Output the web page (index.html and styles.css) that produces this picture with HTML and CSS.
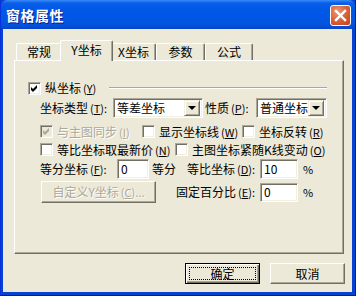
FILE: index.html
```html
<!DOCTYPE html>
<html lang="zh">
<head>
	<meta charset="UTF-8" />
	<title>窗格属性</title>
	<link rel="stylesheet" href="styles.css">
</head>
<body>

<div class="window">

	<!-- 标题栏 -->
	<div class="titlebar">
		<span class="title">窗格属性</span>
		<span class="close">
			<svg width="13" height="13" viewBox="0 0 13 13"><path d="M2 2 L11 11 M11 2 L2 11" stroke="#fff" stroke-width="2.4" stroke-linecap="square"/></svg>
		</span>
	</div>

	<div class="client">

		<div class="tabs">
			<div class="tab t1">常规</div>
			<div class="tab t2 active">Y坐标</div>
			<div class="tab t3">X坐标</div>
			<div class="tab t4">参数</div>
			<div class="tab t5">公式</div>
		</div>

		<div class="panel">

			<div class="row row1">
				<span class="check"><svg width="7" height="7" viewBox="0 0 7 7"><polygon points="0,2 2,4 6,0 6,3 2,7 0,5" fill="#000"/></svg></span>
				<span class="cap">纵坐标<span class="key">(<u>Y</u>)</span></span>
				<span class="sep"></span>
			</div>

			<div class="row row2 indent">
				<span class="lbl w73">坐标类型<span class="key">(<u>T</u>):</span></span>
				<span class="combo c1"><span class="val">等差坐标</span><span class="drop"><i></i></span></span>
				<span class="lbl w51 ml2">性质<span class="key">(<u>P</u>):</span></span>
				<span class="combo c2"><span class="val">普通坐标</span><span class="drop"><i></i></span></span>
			</div>

			<div class="row row3 indent">
				<span class="item w102 disabled">
					<span class="check off"><svg width="7" height="7" viewBox="0 0 7 7"><polygon points="0,2 2,4 6,0 6,3 2,7 0,5" fill="#ACA899"/></svg></span>
					<span class="cap">与主图同步<span class="key">(<u>I</u>)</span></span>
				</span>
				<span class="item w100">
					<span class="check"></span>
					<span class="cap">显示坐标线<span class="key">(<u>W</u>)</span></span>
				</span>
				<span class="item">
					<span class="check"></span>
					<span class="cap">坐标反转<span class="key">(<u>R</u>)</span></span>
				</span>
			</div>

			<div class="row row4 indent">
				<span class="item w135">
					<span class="check"></span>
					<span class="cap">等比坐标取最新价<span class="key">(<u>N</u>)</span></span>
				</span>
				<span class="item">
					<span class="check"></span>
					<span class="cap">主图坐标紧随K线变动<span class="key">(<u>O</u>)</span></span>
				</span>
			</div>

			<div class="row row5 indent">
				<span class="lbl w77">等分坐标<span class="key">(<u>F</u>):</span></span>
				<span class="edit w32">0</span>
				<span class="lbl w35 ml3">等分</span>
				<span class="lbl w73">等比坐标<span class="key">(<u>D</u>):</span></span>
				<span class="edit w38">10</span>
				<span class="pct">%</span>
			</div>

			<div class="row row6 indent">
				<button class="btn custom" type="button" disabled>自定义Y坐标<span class="key">(<u>C</u>)...</span></button>
				<span class="lbl w84 ml20">固定百分比<span class="key">(<u>E</u>):</span></span>
				<span class="edit w38 short">0</span>
				<span class="pct">%</span>
			</div>

		</div>

		<div class="buttons">
			<button class="btn default" type="button"><span class="focus">确定</span></button>
			<button class="btn" type="button">取消</button>
		</div>

	</div>
</div>

</body>
</html>
```

FILE: styles.css
```css
* {
	box-sizing: border-box;
}

body {
	margin: 0;
	font-family: 'Noto Sans CJK SC', 'DejaVu Sans', sans-serif;
	font-size: 12px;
	line-height: 14px;
	color: #000;
	background: #fff;
}

u {
	text-decoration: underline;
	text-underline-offset: 1px;
}

/* 助记符 (X) 用窄一点的字 */
.key {
	font-size: 11px;
	margin-left: 2px;
}

/* 外框 */
.window {
	width: 356px;
	height: 296px;
	background: #0842D0;
	display: flex;
	flex-direction: column;
	border-left: 1px solid #0831D9;
	border-right: 1px solid #001EA0;
	border-bottom: 1px solid #001EA0;
}

.titlebar {
	height: 29px;
	flex-shrink: 0;
	display: flex;
	align-items: center;
	justify-content: space-between;
	padding: 0 4px 0 5px;
	background: linear-gradient(to bottom, #3A8CF8 0%, #0B5FE9 10%, #0058E6 30%, #0256E4 70%, #0450D8 90%, #0645C8 100%);
	border-radius: 6px 6px 0 0;
}

.title {
	color: #fff;
	font-weight: bold;
	font-size: 14px;
	letter-spacing: 0.5px;
	text-shadow: 1px 1px #0A1E88;
	margin-top: 1px;
}

.close {
	width: 21px;
	height: 21px;
	border: 1px solid #fff;
	border-radius: 3px;
	background: radial-gradient(circle at 35% 30%, #E9997A 0%, #D9623A 50%, #C1401A 100%);
	display: flex;
	align-items: center;
	justify-content: center;
	margin-top: 2px;
}

.close svg {
	display: block;
}

.client {
	flex: 1;
	margin: 0 3px 3px 2px;
	background: #ECE9D8;
	padding: 11px 0 0 11px;
}

/* 选项卡 */
.tabs {
	display: flex;
	align-items: flex-end;
	height: 20px;
	padding-left: 2px;
	position: relative;
	z-index: 1;
}

.tab {
	height: 17px;
	padding-top: 1px;
	text-align: center;
	background: #ECE9D8;
	border-top: 1px solid #fff;
	border-left: 1px solid #fff;
	border-right: 1px solid #716F64;
	box-shadow: inset -1px 0 #ACA899;
	border-radius: 2px 2px 0 0;
}

.tab.t1 { width: 46px; }
.tab.t2 { width: 51px; }
.tab.t3 { width: 45px; }
.tab.t4 { width: 49px; }
.tab.t5 { width: 48px; }

.tab.active {
	height: 21px;
	margin: 0 -2px -1px -2px;
	padding-top: 2px;
	position: relative;
	z-index: 2;
}

.tab.t2.active { width: 53px; }

.panel {
	width: 330px;
	height: 194px;
	border-top: 1px solid #fff;
	border-left: 1px solid #fff;
	border-right: 1px solid #716F64;
	border-bottom: 1px solid #716F64;
	box-shadow: inset -1px -1px #ACA899;
	padding: 20px 16px 0 13px;
}

.row {
	display: flex;
	align-items: center;
	white-space: nowrap;
}

.indent {
	margin-left: 12px;
}

.row1 { height: 14px; }
.row2 { height: 20px; margin-top: 3px; }
.row3 { height: 15px; margin-top: 6px; }
.row4 { height: 15px; margin-top: 3px; }
.row5 { height: 20px; margin-top: 2px; }
.row6 { height: 22px; margin-top: 2px; }

.cap {
	margin-left: 4px;
}

.sep {
	flex: 1;
	height: 2px;
	margin-left: 13px;
	border-top: 1px solid #ACA899;
	border-bottom: 1px solid #fff;
}

/* 复选框 */
.check {
	width: 13px;
	height: 13px;
	flex-shrink: 0;
	background: #fff;
	border: 1px solid;
	border-color: #ACA899 #fff #fff #ACA899;
	box-shadow: inset 1px 1px #716F64, inset -1px -1px #F1EFE2;
	display: flex;
	align-items: center;
	justify-content: center;
}

.check svg {
	display: block;
}

.check.off {
	background: #ECE9D8;
}

.item {
	display: flex;
	align-items: center;
}

.disabled .cap {
	color: #ACA899;
	text-shadow: 1px 1px #fff;
}

.w32 { width: 32px; }
.w35 { width: 35px; }
.w38 { width: 38px; }
.w51 { width: 51px; }
.w73 { width: 73px; }
.w77 { width: 77px; }
.w84 { width: 84px; }
.w100 { width: 100px; }
.w102 { width: 102px; }
.w135 { width: 135px; }
.ml2 { margin-left: 2px; }
.ml3 { margin-left: 3px; }
.ml20 { margin-left: 20px; }

.lbl {
	flex-shrink: 0;
}

/* 下拉框 */
.combo {
	height: 20px;
	display: flex;
	align-items: center;
	background: #fff;
	border: 1px solid;
	border-color: #ACA899 #fff #fff #ACA899;
	box-shadow: inset 1px 1px #716F64, inset -1px -1px #F1EFE2;
	padding: 2px;
	flex-shrink: 0;
}

.combo.c1 { width: 90px; }
.combo.c2 { width: 71px; }

.combo .val {
	flex: 1;
	padding-left: 1px;
}

.drop {
	width: 16px;
	height: 16px;
	flex-shrink: 0;
	background: #ECE9D8;
	border: 1px solid;
	border-color: #F1EFE2 #716F64 #716F64 #F1EFE2;
	box-shadow: inset 1px 1px #fff, inset -1px -1px #ACA899;
	display: flex;
	align-items: center;
	justify-content: center;
}

.drop i {
	width: 0;
	height: 0;
	border-left: 4px solid transparent;
	border-right: 4px solid transparent;
	border-top: 4px solid #000;
}

/* 文本框 */
.edit {
	height: 20px;
	background: #fff;
	border: 1px solid;
	border-color: #ACA899 #fff #fff #ACA899;
	box-shadow: inset 1px 1px #716F64, inset -1px -1px #F1EFE2;
	padding: 2px 0 0 3px;
	flex-shrink: 0;
}

.edit.short {
	height: 19px;
	padding-top: 1px;
}

.pct {
	margin-left: 5px;
	font-size: 11px;
}

/* 按钮 */
.btn {
	font-family: inherit;
	font-size: 12px;
	line-height: 14px;
	color: #000;
	background: #ECE9D8;
	border: 1px solid;
	border-color: #fff #716F64 #716F64 #fff;
	box-shadow: inset -1px -1px #ACA899;
	padding: 0;
	width: 75px;
	height: 21px;
	display: flex;
	align-items: center;
	justify-content: center;
}

.btn.custom {
	width: 115px;
	height: 22px;
	margin-left: 1px;
	color: #ACA899;
	text-shadow: 1px 1px #fff;
}

.buttons {
	display: flex;
	justify-content: flex-end;
	gap: 10px;
	margin-top: 9px;
	padding-right: 7px;
}

.btn.default {
	border: 1px solid #000;
	box-shadow: inset 1px 1px #fff, inset -1px -1px #716F64, inset -2px -2px #ACA899;
	padding: 3px;
}

.btn .focus {
	flex: 1;
	align-self: stretch;
	border: 1px dotted #000;
	display: flex;
	align-items: center;
	justify-content: center;
}
```
